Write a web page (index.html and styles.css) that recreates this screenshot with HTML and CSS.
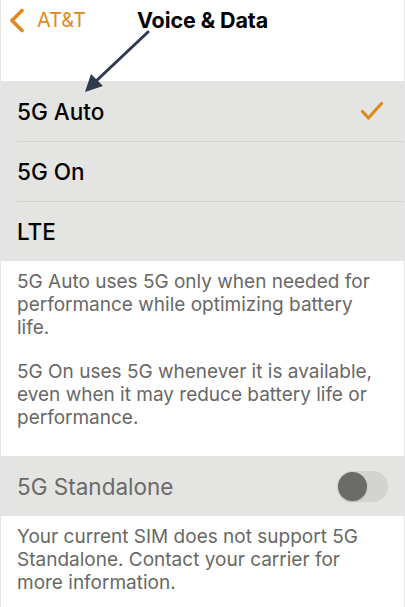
FILE: index.html
```html
<!DOCTYPE html>
<html lang="en">
<head>
  <meta charset="UTF-8" />
  <meta name="viewport" content="width=device-width, initial-scale=1.0"/>
  <title>Voice &amp; Data</title>
  <link rel="stylesheet" href="styles.css">
</head>
<body>
  <div class="screen">

    <!-- ================== Navigation bar ================== -->
    <header class="nav">
      <a class="back" href="#">
        <svg class="chevron" width="16" height="25" viewBox="0 0 16 25">
          <path d="M13 2.5 L3 12.5 L13 22.5" fill="none" stroke="#e0891f" stroke-width="3.6" stroke-linecap="round" stroke-linejoin="round"/>
        </svg>
        <span>AT&amp;T</span>
      </a>
      <h1 class="title">Voice &amp; Data</h1>
      <span></span>
    </header>

    <!-- annotation arrow pointing at the first option -->
    <svg class="callout" width="80" height="70" viewBox="0 0 80 70">
      <line x1="66" y1="2" x2="12" y2="53" stroke="#2f3a4d" stroke-width="3" stroke-linecap="round"/>
      <polygon points="3,62 9,44 21,56" fill="#2f3a4d"/>
    </svg>

    <!-- ================== Network mode ================== -->
    <ul class="group">
      <li class="row"><span>5G Auto</span>
        <svg class="check" width="24" height="20" viewBox="0 0 24 20">
          <path d="M2.5 10.5 L8.5 17 L21.5 2.5" fill="none" stroke="#e0891f" stroke-width="3.2" stroke-linecap="round" stroke-linejoin="round"/>
        </svg>
      </li>
      <li class="row"><span>5G On</span></li>
      <li class="row"><span>LTE</span></li>
    </ul>

    <div class="note">
      <p>5G Auto uses 5G only when needed for performance while optimizing battery life.</p>
      <p>5G On uses 5G whenever it is available, even when it may reduce battery life or performance.</p>
    </div>

    <!-- ================== Standalone ================== -->
    <ul class="group">
      <li class="row disabled"><span>5G Standalone</span>
        <span class="switch"><span class="knob"></span></span>
      </li>
    </ul>

    <div class="note">
      <p>Your current SIM does not support 5G Standalone. Contact your carrier for more information.</p>
    </div>

  </div>
</body>
</html>
```

FILE: styles.css
```css
body {
  margin: 0;
  background-color: #ffffff;
  font-family: Inter, "Noto Sans", sans-serif;
}
.screen {
  position: relative;
  width: 405px;
  min-height: 607px;
  box-sizing: border-box;
  border-left: 1px solid #e4e4e4;
  border-right: 1px solid #e4e4e4;
}
.nav {
  display: grid;
  grid-template-columns: 1fr auto 1fr;
  align-items: center;
  height: 81px;
  padding-bottom: 41px;
  box-sizing: border-box;
}
.back {
  display: flex;
  align-items: center;
  gap: 12px;
  margin-left: 8px;
  color: #e0891f;
  font-size: 20px;
  text-decoration: none;
}
.title {
  margin: 0;
  font-size: 21.5px;
  font-weight: 700;
  letter-spacing: -0.1px;
  color: #000;
}
.callout {
  position: absolute;
  left: 81px;
  top: 30px;
}
.group {
  list-style: none;
  margin: 0;
  padding: 0;
  background-color: #e4e4e2;
}
.row {
  display: flex;
  align-items: center;
  justify-content: space-between;
  height: 60px;
  margin-left: 16px;
  padding-right: 16px;
  font-size: 22.5px;
  font-weight: 500;
  color: #000;
}
.row + .row {
  border-top: 1px solid #d2d2d0;
  height: 59px;
}
.check {
  margin-right: 4px;
}
.disabled {
  color: #6a6a68;
  font-weight: 400;
}
.switch {
  display: flex;
  align-items: center;
  width: 51px;
  height: 31px;
  border-radius: 16px;
  background-color: #d3d3d1;
  padding: 0 1px;
  box-sizing: border-box;
}
.knob {
  width: 29px;
  height: 29px;
  border-radius: 50%;
  background-color: #6b6b6a;
  box-shadow: 0 1px 2px rgba(0, 0, 0, 0.15);
}
.note {
  padding: 9px 17px 27px 16px;
  color: #686866;
  font-size: 19px;
  line-height: 23px;
}
.note p {
  margin: 0;
}
.note p + p {
  margin-top: 21px;
}
```
